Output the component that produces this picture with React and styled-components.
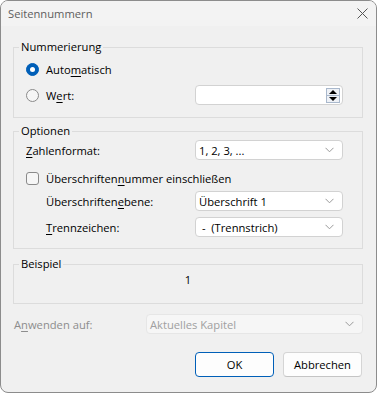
import React from "react";
import styled, { createGlobalStyle } from "styled-components";

const Global = createGlobalStyle`
  html, body { margin: 0; padding: 0; background: #ffffff; }
  * { box-sizing: border-box; }
  body { font-family: "Open Sans", "Noto Sans", sans-serif; font-size: 11.2px; }
`;

const Window = styled.div`
  width: 377px;
  height: 393px;
  border: 1px solid #8c8c8c;
  border-radius: 8px;
  background: #f0f0f0;
  overflow: hidden;
  display: flex;
  flex-direction: column;
  color: #000;
`;

const TitleBar = styled.div`
  height: 25px;
  flex: none;
  background: #f3f3f3;
  display: flex;
  align-items: center;
  justify-content: space-between;
  padding: 0 8px 0 7px;
  font-size: 11.2px;
  color: #5e5e5e;
`;

const CloseBtn = styled.div`
  width: 12px;
  height: 12px;
  display: flex;
  align-items: center;
  justify-content: center;
`;

const Body = styled.div`
  flex: 1;
  padding: 13px 13px 0 12px;
  display: flex;
  flex-direction: column;
`;

const Group = styled.fieldset`
  margin: ${(p) => p.$mt || 0}px 0 0 0;
  border: 1px solid #dcdcdc;
  padding: ${(p) => p.$pt}px 19px ${(p) => p.$pb}px 12px;
  display: flex;
  flex-direction: column;
  min-width: 0;
`;

const Legend = styled.legend`
  font-size: 11.2px;
  line-height: 16px;
  padding: 0 2px;
  margin-left: -7px;
`;

const Row = styled.div`
  height: 20px;
  margin-top: ${(p) => p.$mt || 0}px;
  display: flex;
  align-items: center;
  justify-content: space-between;
  padding-left: ${(p) => p.$indent || 0}px;
`;

const LabelWrap = styled.label`
  display: flex;
  align-items: center;
  gap: 7px;
  color: ${(p) => (p.$disabled ? "#8d8d8d" : "#000")};
  white-space: nowrap;
`;

const RadioCircle = styled.span`
  width: 13px;
  height: 13px;
  border-radius: 50%;
  flex: none;
  display: flex;
  align-items: center;
  justify-content: center;
  background: ${(p) => (p.$checked ? "#005fb8" : "#f6f6f6")};
  border: 1px solid ${(p) => (p.$checked ? "#005fb8" : "#8a8a8a")};
  &::after {
    content: "";
    display: ${(p) => (p.$checked ? "block" : "none")};
    width: 5px;
    height: 5px;
    border-radius: 50%;
    background: #fff;
  }
`;

const CheckBox = styled.span`
  width: 13px;
  height: 13px;
  border-radius: 3px;
  flex: none;
  background: #f6f6f6;
  border: 1px solid #8a8a8a;
`;

const Control = styled.div`
  width: ${(p) => p.$w || 148}px;
  height: 20px;
  flex: none;
  background: ${(p) => (p.$disabled ? "#f6f6f6" : "#ffffff")};
  border: 1px solid ${(p) => (p.$disabled ? "#e6e6e6" : "#d2d2d2")};
  border-radius: 4px;
  display: flex;
  align-items: center;
  justify-content: space-between;
  padding: 0 8px 0 3px;
  color: ${(p) => (p.$disabled ? "#a0a0a0" : "#000")};
  white-space: pre;
`;

const SpinInput = styled(Control)`
  padding-right: 2px;
`;

const Spinner = styled.div`
  display: flex;
  flex-direction: column;
  width: 14px;
  height: 15px;
`;

const SpinHalf = styled.div`
  flex: 1;
  border: 1px solid #a9b8cc;
  background: #eef1f6;
  display: flex;
  align-items: center;
  justify-content: center;
  & + & { border-top: none; }
`;

const Sample = styled.div`
  height: 16px;
  line-height: 16px;
  text-align: center;
  margin-right: -7px;
`;

const BottomRow = styled.div`
  height: 20px;
  margin-top: 10px;
  display: flex;
  align-items: center;
  justify-content: space-between;
  padding-left: 1px;
`;

const Buttons = styled.div`
  margin-top: 18px;
  display: flex;
  justify-content: flex-end;
  gap: 9px;
  padding-right: 1px;
`;

const Button = styled.button`
  width: 79px;
  height: 25px;
  font-family: inherit;
  font-size: 11.2px;
  color: #000;
  background: #fdfdfd;
  border: 1px solid ${(p) => (p.$primary ? "#005fb8" : "#d5d5d5")};
  border-bottom-color: ${(p) => (p.$primary ? "#005fb8" : "#c4c4c4")};
  border-radius: 4px;
  padding: 0;
`;

const U = styled.span`
  text-decoration: underline;
  text-underline-offset: 2px;
`;

const Chevron = () => (
  <svg width="9" height="6" viewBox="0 0 9 6">
    <path d="M0.5 0.8 L4.5 4.8 L8.5 0.8" fill="none" stroke="#999" strokeWidth="1" />
  </svg>
);

const Dropdown = ({ value, w, disabled }) => (
  <Control $w={w} $disabled={disabled}>
    <span>{value}</span>
    <Chevron />
  </Control>
);

export default function App() {
  return (
    <>
      <Global />
      <Window>
        <TitleBar>
          <span>Seitennummern</span>
          <CloseBtn>
            <svg width="11" height="11" viewBox="0 0 11 11">
              <path d="M0.5 0.5 L10.5 10.5 M10.5 0.5 L0.5 10.5" stroke="#555" strokeWidth="1" />
            </svg>
          </CloseBtn>
        </TitleBar>
        <Body>
          <Group $pt={4} $pb={12}>
            <Legend>Nummerierung</Legend>
            <Row>
              <LabelWrap>
                <RadioCircle $checked />
                <span>Auto<U>m</U>atisch</span>
              </LabelWrap>
            </Row>
            <Row $mt={6}>
              <LabelWrap>
                <RadioCircle />
                <span>W<U>e</U>rt:</span>
              </LabelWrap>
              <SpinInput>
                <span />
                <Spinner>
                  <SpinHalf>
                    <svg width="8" height="4" viewBox="0 0 8 4"><path d="M0 4 L4 0 L8 4 Z" fill="#000" /></svg>
                  </SpinHalf>
                  <SpinHalf>
                    <svg width="8" height="4" viewBox="0 0 8 4"><path d="M0 0 L4 4 L8 0 Z" fill="#000" /></svg>
                  </SpinHalf>
                </Spinner>
              </SpinInput>
            </Row>
          </Group>

          <Group $mt={5} $pt={1} $pb={11}>
            <Legend>Optionen</Legend>
            <Row>
              <LabelWrap><span><U>Z</U>ahlenformat:</span></LabelWrap>
              <Dropdown value="1, 2, 3, ..." />
            </Row>
            <Row $mt={8}>
              <LabelWrap>
                <CheckBox />
                <span>Überschriften<U>n</U>ummer einschließen</span>
              </LabelWrap>
            </Row>
            <Row $mt={3} $indent={20}>
              <LabelWrap><span>Überschriften<U>e</U>bene:</span></LabelWrap>
              <Dropdown value="Überschrift 1" />
            </Row>
            <Row $mt={6} $indent={20}>
              <LabelWrap><span><U>T</U>rennzeichen:</span></LabelWrap>
              <Dropdown value=" -  (Trennstrich)" />
            </Row>
          </Group>

          <Group $mt={7} $pt={0} $pb={15}>
            <Legend>Beispiel</Legend>
            <Sample>1</Sample>
          </Group>

          <BottomRow>
            <LabelWrap $disabled><span>A<U>n</U>wenden auf:</span></LabelWrap>
            <Dropdown value="Aktuelles Kapitel" w={217} disabled />
          </BottomRow>

          <Buttons>
            <Button $primary>OK</Button>
            <Button>Abbrechen</Button>
          </Buttons>
        </Body>
      </Window>
    </>
  );
}
